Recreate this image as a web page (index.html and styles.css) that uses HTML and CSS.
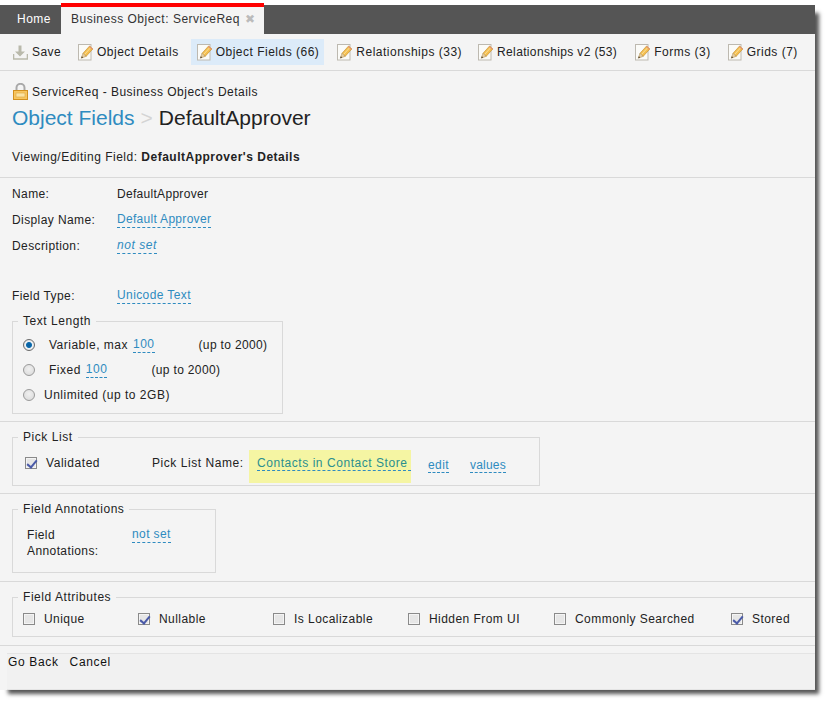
FILE: index.html
```html
<!DOCTYPE html>
<html lang="en">
<head>
<meta charset="utf-8">
<title>Business Object: ServiceReq</title>
<link rel="stylesheet" href="styles.css">
</head>
<body>
<svg class="defs" width="0" height="0" aria-hidden="true">
  <defs>
    <symbol id="pencil" viewBox="0 0 15 17">
      <rect x="0.5" y="0.5" width="12.5" height="15.5" fill="#fbfbf8" stroke="#bdb9b0"/>
      <path d="M5 9.3 L11.6 2 L14.9 4.9 L8.1 12.4 Z" fill="#f4bf50" stroke="#c08a2c" stroke-width="0.6"/>
      <path d="M6.4 10.6 L13 3.4" stroke="#fbe09a" stroke-width="1" fill="none"/>
      <path d="M3.2 14.2 L5 9.3 L8.1 12.4 Z" fill="#e8cfa0" stroke="#a98a55" stroke-width="0.5"/>
      <path d="M3.2 14.2 L3.9 12.2 L5.2 13.4 Z" fill="#4a3a25"/>
      <path d="M11 2.7 L11.6 2 L14.9 4.9 L14.2 5.7 Z" fill="#e58f70"/>
    </symbol>
  </defs>
</svg>
<div class="window">
  <div class="tabs">
    <div class="tab">Home</div>
    <div class="tab tab-active">Business Object: ServiceReq <span class="tab-close">✖</span></div>
  </div>
  <div class="toolbar">
    <div class="tool tool-save">
      <svg class="save-icon" width="15" height="15" viewBox="0 0 15 15"><path d="M5.5 0.5h3v6h3.5L7 11.5 2 6.5h3.5z" fill="#b9b9ab"/><path d="M0.5 9v5h14V9" fill="none" stroke="#b9b9ab" stroke-width="1.6"/></svg>
      Save
    </div>
    <div class="tool"><svg class="pencil"><use href="#pencil"/></svg>Object Details</div>
    <div class="tool tool-active"><svg class="pencil"><use href="#pencil"/></svg>Object Fields (66)</div>
    <div class="tool tool-near"><svg class="pencil"><use href="#pencil"/></svg>Relationships (33)</div>
    <div class="tool tool-tight"><svg class="pencil"><use href="#pencil"/></svg>Relationships v2 (53)</div>
    <div class="tool"><svg class="pencil"><use href="#pencil"/></svg>Forms (3)</div>
    <div class="tool"><svg class="pencil"><use href="#pencil"/></svg>Grids (7)</div>
  </div>
  <div class="heading">
    <div class="crumb">
      <svg class="lock" width="15" height="17" viewBox="0 0 15 17"><path d="M3.5 8V4.8a4 4 0 0 1 8 0V8" fill="none" stroke="#a9a9a9" stroke-width="2"/><rect x="0.5" y="7.5" width="14" height="9" fill="#f8c660" stroke="#d2901f"/><rect x="3" y="10" width="9" height="4" fill="#fbe3a4" stroke="#dba53f" stroke-width="0.6"/></svg>
      ServiceReq - Business Object's Details
    </div>
    <div class="title"><span class="title-link">Object Fields</span><span class="title-sep">&gt;</span><span>DefaultApprover</span></div>
    <div class="viewing">Viewing/Editing Field: <b>DefaultApprover's Details</b></div>
  </div>
  <div class="section section-main">
    <div class="row"><span class="label">Name:</span><span class="value-plain">DefaultApprover</span></div>
    <div class="row"><span class="label">Display Name:</span><span class="edit edit-tight">Default Approver</span></div>
    <div class="row"><span class="label">Description:</span><span class="edit edit-italic">not set</span></div>
    <div class="row row-type"><span class="label">Field Type:</span><span class="edit">Unicode Text</span></div>
    <fieldset class="box box-length">
      <legend>Text Length</legend>
      <div class="opt opt-1"><span class="radio radio-on"></span><span class="opt-label">Variable, max</span><span class="edit">100</span><span class="opt-note">(up to 2000)</span></div>
      <div class="opt"><span class="radio"></span><span class="opt-label">Fixed</span><span class="edit">100</span><span class="opt-note">(up to 2000)</span></div>
      <div class="opt"><span class="radio"></span><span class="opt-unl">Unlimited (up to 2GB)</span></div>
    </fieldset>
  </div>
  <div class="section section-pick">
    <fieldset class="box box-pick">
      <legend>Pick List</legend>
      <div class="pick">
        <span class="check check-on pick-check"></span><span class="pick-label">Validated</span>
        <span class="pick-name">Pick List Name:</span>
        <span class="pick-hl"><span class="edit edit-hl">Contacts in Contact Store</span></span>
        <span class="edit pick-edit">edit</span>
        <span class="edit pick-values">values</span>
      </div>
    </fieldset>
  </div>
  <div class="section section-ann">
    <fieldset class="box box-ann">
      <legend>Field Annotations</legend>
      <div class="ann"><span class="ann-label">Field Annotations:</span><span class="edit">not set</span></div>
    </fieldset>
  </div>
  <div class="section section-attr">
    <fieldset class="box box-attr">
      <legend>Field Attributes</legend>
      <div class="attrs">
        <div class="attr attr-a"><span class="check"></span>Unique</div>
        <div class="attr attr-b"><span class="check check-on"></span>Nullable</div>
        <div class="attr attr-c"><span class="check"></span>Is Localizable</div>
        <div class="attr attr-d"><span class="check"></span>Hidden From UI</div>
        <div class="attr attr-e"><span class="check"></span>Commonly Searched</div>
        <div class="attr"><span class="check check-on"></span>Stored</div>
      </div>
    </fieldset>
  </div>
  <div class="footer"><span>Go Back</span><span>Cancel</span></div>
</div>
</body>
</html>
```
FILE: styles.css
```css
* { box-sizing: border-box; }
html, body { margin: 0; padding: 0; background: #fff; }
body { width: 830px; height: 706px; overflow: hidden; padding-top: 5px; font-family: "Liberation Sans", Arial, sans-serif; font-size: 12px; color: #222; letter-spacing: 0.4px; }
.defs { position: absolute; }
.window { width: 815px; height: 685px; background: #f4f4f4; box-shadow: 6px 6px 4px -2px #555; display: flex; flex-direction: column; }

.tabs { height: 29px; background: #555; display: flex; flex: none; letter-spacing: 0.5px; }
.tab { width: 61px; padding-left: 17px; line-height: 28px; color: #fff; }
.tab-active { position: relative; width: 203px; padding-left: 10px; background: #f4f4f4; color: #333; white-space: nowrap; }
.tab-active::before { content: ""; position: absolute; left: 0; right: 0; top: -2px; height: 4px; background: #f00; }
.tab-close { color: #bbb; font-size: 12px; margin-left: 1px; }

.toolbar { height: 37px; border-bottom: 1px solid #d9d9d9; display: flex; align-items: center; padding-left: 13px; flex: none; letter-spacing: 0.5px; }
.tool { display: flex; align-items: center; height: 26px; padding: 0 5px 0 6px; margin-right: 6px; white-space: nowrap; }
.tool-save { padding: 0; margin-right: 11px; gap: 4px; letter-spacing: 0.4px; }
.tool-active { background: #dcebf9; margin-left: 1px; margin-right: 7px; }
.tool-near { margin-right: 5px; }
.tool-tight { letter-spacing: 0.35px; margin-right: 7px; }
.pencil { width: 15px; height: 17px; margin-right: 4px; flex: none; }
.save-icon { flex: none; }

.heading { flex: none; padding: 12px 0 0 12px; height: 107px; border-bottom: 1px solid #d9d9d9; }
.crumb { display: flex; align-items: center; gap: 4px; height: 17px; letter-spacing: 0.48px; }
.lock { margin-left: 1px; }
.title { font-size: 21px; line-height: 30px; margin-top: 3px; color: #222; letter-spacing: 0; }
.title-link { color: #2e8bc0; }
.title-sep { color: #d4d4d4; margin: 0 6px; }
.viewing { margin-top: 16px; line-height: 16px; letter-spacing: 0.5px; }

.section { flex: none; border-bottom: 1px solid #d9d9d9; padding-left: 12px; }
.section-main { height: 244px; padding-top: 3px; }
.row { display: flex; line-height: 26px; height: 26px; }
.row-type { margin-top: 24px; }
.label { width: 105px; flex: none; }
.value-plain { letter-spacing: 0.3px; }
.edit { color: #2e8bc0; border-bottom: 1px dashed #2e8bc0; line-height: 14px; height: 16px; align-self: center; white-space: nowrap; }
.edit-tight { letter-spacing: 0.3px; }
.edit-italic { font-style: italic; letter-spacing: 0.55px; }

.box { border: 1px solid #d9d9d9; margin: 0; padding: 0; min-width: 0; }
.box legend { padding: 0 5px; margin-left: 5px; line-height: 14px; letter-spacing: 0.55px; }
.box-length { width: 271px; height: 100px; margin-top: 5px; letter-spacing: 0.5px; }
.opt { display: flex; align-items: center; height: 25px; padding-left: 10px; }
.opt-1 { margin-top: 4px; }
.opt-label { margin-left: 14px; margin-right: 5px; }
.opt-note { margin-left: 44px; letter-spacing: 0.35px; }
.opt-unl { margin-left: 9px; }
.radio { width: 12px; height: 12px; flex: none; border-radius: 50%; border: 1px solid #9a9a9a; background: radial-gradient(circle at 50% 40%, #f0f0f0 0, #d8d8d8 100%); }
.radio-on { background: radial-gradient(circle, #0a5f9c 0, #0a6aae 2.5px, #eef2f5 3.5px, #d8d8d8 100%); border-color: #6b6b6b; }

.section-pick { height: 72px; padding-top: 8px; letter-spacing: 0.55px; }
.box-pick { width: 528px; height: 56px; }
.pick { display: flex; align-items: flex-start; height: 33px; margin-top: 6px; padding-left: 12px; }
.check { width: 12px; height: 12px; flex: none; border: 1px solid #8a8a8a; background: #e6e6e6; box-shadow: inset 0 0 0 1px #f4f4f4; position: relative; display: inline-block; }
.check-on::after { content: ""; position: absolute; left: 3px; top: 0; width: 4px; height: 8px; border-right: 2px solid #4a5aa8; border-bottom: 2px solid #4a5aa8; transform: rotate(40deg); }
.pick-check { margin-top: 7px; }
.pick-label { margin: 6px 0 0 9px; width: 106px; }
.pick-name { width: 97px; margin-top: 6px; }
.pick-hl { display: block; height: 33px; width: 162px; padding: 6px 0 0 8px; background: #f5f5a3; }
.edit-hl { display: block; height: 15px; color: #2a8f8f; }
.pick-edit { margin: 8px 0 0 17px; height: 15px; align-self: flex-start; letter-spacing: 0.4px; }
.pick-values { margin: 8px 0 0 21px; height: 15px; align-self: flex-start; letter-spacing: 0.2px; }

.section-ann { height: 88px; padding-top: 8px; }
.box-ann { width: 204px; height: 71px; }
.ann { display: flex; padding: 11px 0 0 14px; }
.ann-label { width: 80px; margin-right: 25px; line-height: 16px; }
.ann .edit { align-self: flex-start; }

.section-attr { height: 64px; padding-top: 8px; letter-spacing: 0.45px; }
.box-attr { border-right: 0; height: 47px; }
.attrs { display: flex; padding: 5px 0 0 10px; }
.attr { display: flex; align-items: center; gap: 9px; height: 20px; white-space: nowrap; }
.attr-a { width: 115px; }
.attr-b { width: 135px; }
.attr-c { width: 135px; }
.attr-d { width: 146px; }
.attr-e { width: 177px; }

.footer { margin: 7px 0 0 7px; flex: 1; background: #f1f1f1; border-top: 1px solid #e4e4e4; border-bottom: 1px solid #e4e4e4; padding: 1px 0 0 1px; display: flex; gap: 11px; line-height: 14px; color: #111; letter-spacing: 0.65px; }
```
